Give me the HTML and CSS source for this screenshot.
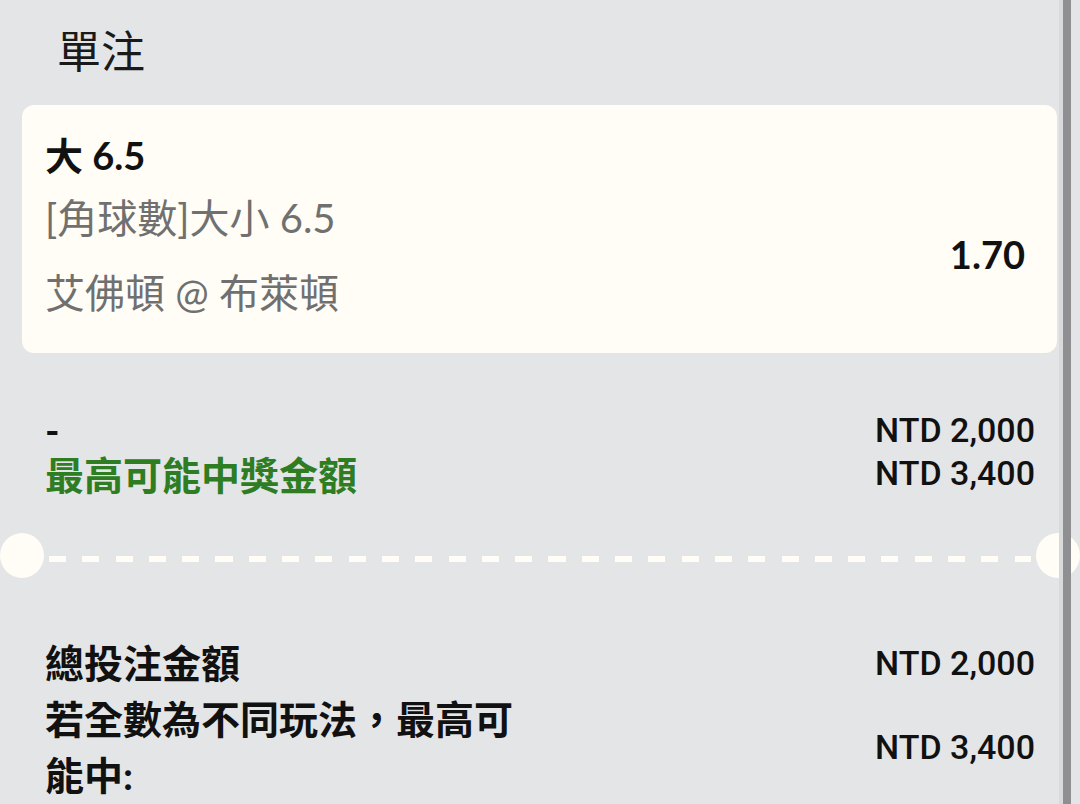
FILE: index.html
```html
<!DOCTYPE html>
<html lang="zh-TW">
<head>
    <meta charset="UTF-8">
    <meta name="viewport" content="width=device-width, initial-scale=1">
    <title>單注</title>
    <link rel="stylesheet" href="styles.css">
</head>
<body>
    <div class="page">
        <div class="slip-title">單注</div>

        <div class="bet-card">
            <div class="bet-pick">大 6.5</div>
            <div class="bet-info">
                <div class="bet-meta">
                    <div class="bet-market">[角球數]大小 6.5</div>
                    <div class="bet-match">艾佛頓 @ 布萊頓</div>
                </div>
                <div class="bet-odds">1.70</div>
            </div>
        </div>

        <div class="summary top-summary">
            <div class="summary-row">
                <span class="summary-label">-</span>
                <span class="amount">NTD 2,000</span>
            </div>
            <div class="summary-row">
                <span class="summary-label win-label">最高可能中獎金額</span>
                <span class="amount">NTD 3,400</span>
            </div>
        </div>

        <div class="divider">
            <div class="notch"></div>
            <div class="dashes"></div>
            <div class="notch"></div>
        </div>

        <div class="summary total-summary">
            <div class="summary-row total-row">
                <span class="summary-label">總投注金額</span>
                <span class="amount">NTD 2,000</span>
            </div>
            <div class="summary-row total-row">
                <span class="summary-label wrap-label">若全數為不同玩法，最高可能中:</span>
                <span class="amount">NTD 3,400</span>
            </div>
        </div>
    </div>
    <div class="scrollbar"></div>
</body>
</html>
```

FILE: styles.css
```css
body {
    margin: 0;
    background: #e4e5e7;
    font-family: Lato, "Noto Sans CJK TC", sans-serif;
    color: #111;
    overflow: hidden;
}
.page {
    width: 1080px;
    height: 804px;
}
.slip-title {
    height: 105px;
    display: flex;
    align-items: center;
    padding: 0 0 8px 57px;
    font-family: "Noto Sans CJK TC", sans-serif;
    font-size: 44px;
    color: #1a1a1a;
    box-sizing: border-box;
}
.bet-card {
    margin: 0 23px 0 22px;
    height: 248px;
    box-sizing: border-box;
    padding: 25px 32px 0 23px;
    background: #fffdf5;
    border-radius: 12px;
}
.bet-pick {
    font-size: 38px;
    font-weight: bold;
    line-height: 50px;
}
.bet-info {
    display: flex;
    justify-content: space-between;
    align-items: center;
}
.bet-meta {
    color: #707070;
    font-size: 40px;
}
.bet-market {
    margin-top: 8px;
    line-height: 60px;
}
.bet-match {
    margin-top: 15px;
    line-height: 60px;
}
.bet-odds {
    font-size: 38px;
    font-weight: bold;
    margin-top: 4px;
}
.summary {
    padding: 0 45px;
}
.top-summary {
    margin-top: 55px;
}
.summary-row {
    display: flex;
    justify-content: space-between;
    align-items: center;
    height: 43px;
}
.summary-label {
    font-size: 39px;
    font-weight: bold;
}
.win-label {
    color: #2f7d22;
}
.amount {
    font-family: Roboto, "Liberation Sans", sans-serif;
    font-size: 34px;
    font-weight: 500;
    color: #111;
}
.divider {
    display: flex;
    align-items: flex-start;
    margin-top: 39px;
    height: 45px;
}
.notch {
    width: 44px;
    height: 45px;
    border-radius: 50%;
    background: #fffdf5;
    flex: none;
}
.dashes {
    flex: 1;
    height: 6px;
    margin: 23px 5px 0;
    background: repeating-linear-gradient(to right, #fffdf5 0 17px, transparent 17px 33.3px);
}
.total-summary {
    margin-top: 57px;
}
.total-row {
    height: auto;
}
.total-row .summary-label {
    line-height: 56px;
}
.wrap-label {
    max-width: 480px;
}
.scrollbar {
    position: fixed;
    top: 0;
    bottom: 0;
    right: 9px;
    width: 8px;
    background: #8f8f91;
    border-left: 4px solid #d9dadc;
}
```
